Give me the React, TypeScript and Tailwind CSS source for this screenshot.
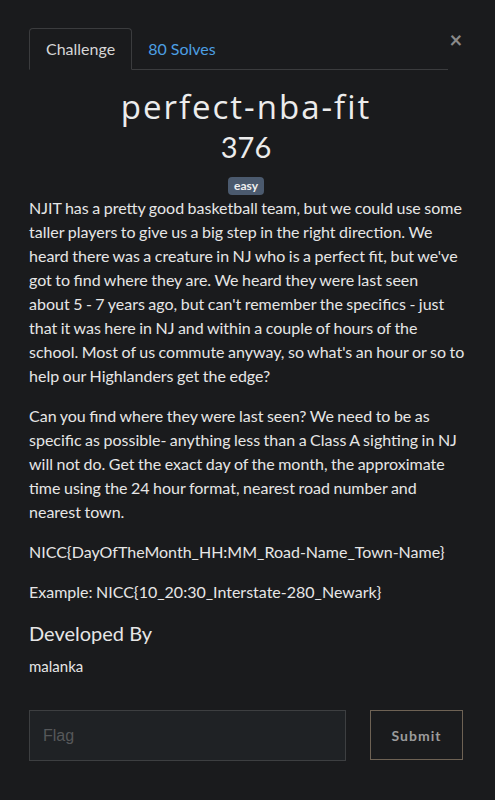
import React, { useState } from "react";

const ChallengeModal: React.FC = () => {
  const [tab, setTab] = useState<"challenge" | "solves">("challenge");
  const [flag, setFlag] = useState<string>("");

  return (
    <div className="min-h-screen bg-[#1a1b1d] px-[29px] pr-[32px] pt-[28px] text-[#e6e6e6] font-['Lato','Open_Sans',sans-serif]">
      {/* Header */}
      <div className="flex items-start">
        <nav className="flex flex-1 border-b border-[#3b3c3e]">
          <button
            onClick={() => setTab("challenge")}
            className="-mb-px h-[42px] rounded-t-[4px] border border-[#3b3c3e] border-b-[#1a1b1d] bg-[#1a1b1d] px-[16px] text-[16px] text-[#d6d6d6]"
          >
            Challenge
          </button>
          <button
            onClick={() => setTab("solves")}
            className="h-[41px] px-[16px] text-[16px] text-[#4c9fe2]"
          >
            80 Solves
          </button>
        </nav>
        <button className="mt-[3px] w-[15px] pl-[1px] text-[22px] font-bold leading-[18px] text-[#8a8a8a]">
          ×
        </button>
      </div>

      {/* Title */}
      <div className="flex flex-col items-center">
        <h1 className="mt-[15px] text-[33px] leading-[44px] tracking-[2px] text-[#ececec] font-['Open_Sans',sans-serif]">
          perfect-nba-fit
        </h1>
        <h3 className="mt-[-2px] text-[29px] leading-[40px] text-[#ececec]">376</h3>
        <span className="mt-[10px] rounded-[4px] bg-[#4b5a6e] px-[6px] py-[2px] text-[12px] font-bold leading-[14px] text-[#f0f0f0]">
          easy
        </span>
      </div>

      {/* Description */}
      <div className="mr-[-16px] mt-[1px] text-[16px] leading-[24px] [word-spacing:-0.6px]">
        <p className="mb-[16px]">
          NJIT has a pretty good basketball team, but we could use some
          <br />
          taller players to give us a big step in the right direction. We
          <br />
          heard there was a creature in NJ who is a perfect fit, but we've
          <br />
          got to find where they are. We heard they were last seen
          <br />
          about 5 - 7 years ago, but can't remember the specifics - just
          <br />
          that it was here in NJ and within a couple of hours of the
          <br />
          school. Most of us commute anyway, so what's an hour or so to
          <br />
          help our Highlanders get the edge?
        </p>
        <p className="mb-[16px]">
          Can you find where they were last seen? We need to be as
          <br />
          specific as possible- anything less than a Class A sighting in NJ
          <br />
          will not do. Get the exact day of the month, the approximate
          <br />
          time using the 24 hour format, nearest road number and
          <br />
          nearest town.
        </p>
        <p className="mb-[16px]">NICC{"{"}DayOfTheMonth_HH:MM_Road-Name_Town-Name{"}"}</p>
        <p className="mb-[16px]">Example: NICC{"{"}10_20:30_Interstate-280_Newark{"}"}</p>
      </div>

      <h4 className="mt-[-1px] text-[20px] leading-[28px]">Developed By</h4>
      <p className="mt-[8px] text-[15px] leading-[22px]">malanka</p>

      {/* Flag form */}
      <div className="mt-[33px] flex gap-[24px]">
        <input
          value={flag}
          onChange={(e) => setFlag(e.target.value)}
          placeholder="Flag"
          className="h-[51px] flex-1 border border-[#3d3f41] bg-[#1f2225] px-[13px] text-[16px] text-[#cccccc] outline-none placeholder:text-[#56585a] font-['Liberation_Sans',sans-serif]"
        />
        <button className="h-[50px] w-[93px] border border-[#6e6254] text-[14px] font-bold tracking-[1px] text-[#9c9c9c]">
          Submit
        </button>
      </div>
    </div>
  );
};

export default ChallengeModal;
